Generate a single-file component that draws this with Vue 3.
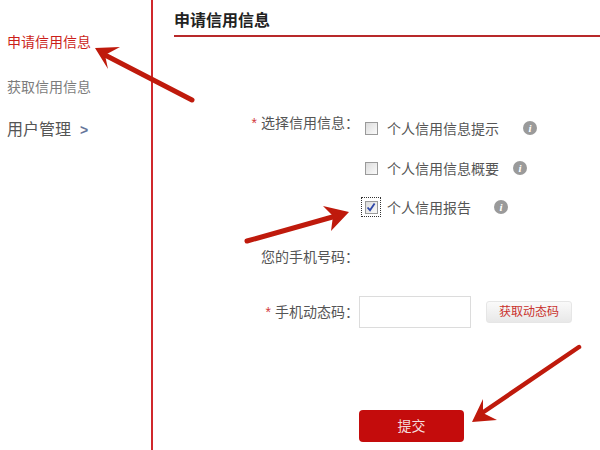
<script setup>
const options = [
  { text: '个人信用信息提示', gap: 'gap-a' },
  { text: '个人信用信息概要', gap: 'gap-b' },
  { text: '个人信用报告', gap: 'gap-c', checked: true }
]
</script>

<template>
  <div class="page">
    <aside class="side">
      <a class="nav active">申请信用信息</a>
      <a class="nav muted">获取信用信息</a>
      <a class="nav user">用户管理<span class="chev">&gt;</span></a>
    </aside>
    <main class="main">
      <h1 class="title">申请信用信息</h1>
      <div class="form">
        <div class="row row-options">
          <div class="label"><span class="star">*</span>选择信用信息：</div>
          <div class="options">
            <div v-for="o in options" :key="o.text" class="option">
              <span class="focus" :class="{ on: o.checked }">
                <span class="box">
                  <svg v-if="o.checked" viewBox="0 0 10 10" width="10" height="10">
                    <path d="M1.5 5.5 L4 8.2 L8.6 1.4" fill="none" stroke="#2f48a8" stroke-width="1.8" />
                  </svg>
                </span>
              </span>
              <span class="opt-text">{{ o.text }}</span>
              <span class="info" :class="o.gap">i</span>
            </div>
          </div>
        </div>
        <div class="row row-phone">
          <div class="label">您的手机号码：</div>
        </div>
        <div class="row row-code">
          <div class="label"><span class="star">*</span>手机动态码：</div>
          <input class="input" type="text" />
          <button class="get" type="button">获取动态码</button>
        </div>
        <div class="row row-submit">
          <div class="label"></div>
          <button class="submit" type="button">提交</button>
        </div>
      </div>
    </main>
    <svg class="arrows" viewBox="0 0 600 450" width="600" height="450">
      <g fill="#bf1a0c" stroke="#bf1a0c" stroke-linecap="round">
        <path d="M95 48 L120 47 L105 55 L108 69 Z" stroke="none" />
        <path d="M103 54 L192 100" stroke-width="5" fill="none" />
        <path d="M349 212 L323 206 L333 216 L331 231 Z" stroke="none" />
        <path d="M247 241 L336 216" stroke-width="5" fill="none" />
        <path d="M472 422 L483 399 L483 413 L497 420 Z" stroke="none" />
        <path d="M482 413 L579 347" stroke-width="4.5" fill="none" />
      </g>
    </svg>
  </div>
</template>

<style scoped>
.page {
  position: relative;
  display: flex;
  width: 600px;
  height: 450px;
  overflow: hidden;
  background: #fff;
  color: #555;
  font-family: "Liberation Sans", "Noto Sans CJK SC", sans-serif;
}
.side {
  box-sizing: border-box;
  width: 153px;
  flex: none;
  height: 450px;
  border-right: 2px solid #d0282c;
  padding: 34px 0 0 7px;
  display: flex;
  flex-direction: column;
}
.nav {
  display: block;
  font-size: 14px;
  line-height: 16px;
}
.active { color: #cc1f1a; }
.muted { color: #7c7c7c; margin-top: 29px; }
.user { color: #555; font-size: 16px; line-height: 18px; margin-top: 26px; }
.chev { color: #64749a; font-size: 14px; margin-left: 9px; font-weight: 700; }
.main {
  flex: 1;
  padding: 12px 0 0 21px;
  min-width: 0;
}
.title {
  margin: 0;
  height: 23px;
  border-bottom: 2px solid #b8292a;
  font-size: 16px;
  line-height: 18px;
  font-weight: 700;
  color: #222;
}
.form {
  display: flex;
  flex-direction: column;
}
.row {
  display: flex;
  align-items: center;
}
.row-options {
  align-items: flex-start;
  margin-top: 78px;
  height: 114px;
}
.label {
  width: 185px;
  flex: none;
  text-align: right;
  font-size: 14px;
  line-height: 16px;
  color: #555;
}
.star {
  color: #d2383c;
  margin-right: 4px;
}
.options {
  display: flex;
  flex-direction: column;
  margin-left: 2px;
  margin-top: 1px;
}
.option {
  display: flex;
  align-items: center;
  height: 24px;
  margin-bottom: 16px;
  font-size: 14px;
  color: #555;
}
.option:nth-child(2) { margin-bottom: 15px; }
.option:last-child { margin-bottom: 0; }
.focus {
  box-sizing: border-box;
  width: 20px;
  height: 20px;
  display: flex;
  align-items: center;
  justify-content: center;
  border: 1px solid transparent;
}
.focus.on { border: 1px dotted #333; }
.box {
  box-sizing: border-box;
  width: 13px;
  height: 13px;
  border: 1px solid #9a9a9a;
  background: linear-gradient(135deg, #dcdcdc, #fafafa);
  display: flex;
  align-items: center;
  justify-content: center;
}
.opt-text { margin-left: 6px; }
.info {
  width: 14px;
  height: 14px;
  border-radius: 50%;
  background: #9a9a9a;
  color: #fff;
  font: italic 700 11px/14px "Liberation Serif", serif;
  text-align: center;
}
.gap-a { margin-left: 24px; }
.gap-b { margin-left: 14px; }
.gap-c { margin-left: 23px; }
.row-phone { margin-top: 20px; height: 16px; }
.row-code { margin-top: 31px; height: 32px; }
.input {
  box-sizing: border-box;
  width: 112px;
  height: 32px;
  margin-left: 0;
  border: 1px solid #dcdcdc;
  outline: none;
  background: #fff;
}
.get {
  box-sizing: border-box;
  width: 86px;
  height: 22px;
  margin-left: 15px;
  padding: 0;
  border: 1px solid #e6e6e6;
  border-radius: 3px;
  background: linear-gradient(#fafafa, #e8e8e8);
  color: #c9302c;
  font: 12px/20px "Liberation Sans", "Noto Sans CJK SC", sans-serif;
}
.row-submit { margin-top: 82px; }
.submit {
  width: 105px;
  height: 32px;
  margin-left: 0;
  padding: 0;
  border: none;
  border-radius: 4px;
  background: #c40c0c;
  color: #f4dcdc;
  font: 14px/32px "Liberation Sans", "Noto Sans CJK SC", sans-serif;
}
.arrows {
  position: absolute;
  left: 0;
  top: 0;
  pointer-events: none;
}
</style>
